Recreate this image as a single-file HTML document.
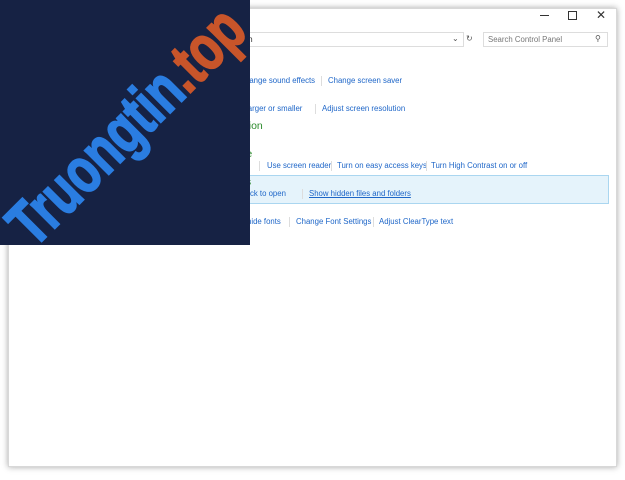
<!DOCTYPE html>
<html><head><style>
body{margin:0;width:625px;height:480px;background:#fff;position:relative;overflow:hidden;font-family:"Liberation Sans",sans-serif;}
.win{position:absolute;left:8px;top:8px;width:607px;height:457px;background:#fff;box-shadow:0 0 6px rgba(0,0,0,.35);border:1px solid #d8d8d8;}
.a{position:absolute;font-size:7.8px;color:#1e66c8;white-space:nowrap;}
.g{position:absolute;font-size:10.5px;color:#2b8a2b;white-space:nowrap;}
.sep{position:absolute;width:1px;height:10px;background:#ddd;}
.logo{position:absolute;left:0;top:0;width:250px;height:245px;background:#162244;overflow:hidden;}
.lt{position:absolute;left:126px;top:126px;transform:translate(-50%,-50%) rotate(-45deg) scaleX(0.74);font-family:"Liberation Sans",sans-serif;font-weight:bold;font-size:64px;line-height:1;color:#2a7de1;white-space:nowrap;-webkit-text-stroke:2px currentColor;}
</style></head><body>
<div class="win"></div>
<div style="position:absolute;left:540px;top:15px;width:9px;height:1px;background:#333"></div>
<div style="position:absolute;left:568px;top:11px;width:7px;height:7px;border:1px solid #333"></div>
<div style="position:absolute;left:596px;top:8px;font-size:12px;color:#333">✕</div>
<div style="position:absolute;left:230px;top:32px;width:232px;height:13px;border:1px solid #ddd"></div>
<div class="a" style="left:240px;top:35px;color:#222">tion</div>
<div class="a" style="left:452px;top:34px;color:#555">⌄</div>
<div class="a" style="left:466px;top:34px;color:#555">↻</div>
<div style="position:absolute;left:483px;top:32px;width:123px;height:13px;border:1px solid #ddd"></div>
<div class="a" style="left:488px;top:35px;color:#777">Search Control Panel</div>
<div class="a" style="left:595px;top:34px;color:#555">⚲</div>
<div class="a" style="left:245px;top:76px">hange sound effects</div><div class="sep" style="left:321px;top:76px"></div>
<div class="a" style="left:328px;top:76px">Change screen saver</div>
<div class="a" style="left:240px;top:104px">s larger or smaller</div><div class="sep" style="left:315px;top:104px"></div>
<div class="a" style="left:322px;top:104px">Adjust screen resolution</div>
<div class="g" style="left:240px;top:120px">ation</div>
<div class="g" style="left:240px;top:148px">tre</div>
<div class="a" style="left:240px;top:161px">n</div><div class="sep" style="left:259px;top:161px"></div>
<div class="a" style="left:267px;top:161px">Use screen reader</div><div class="sep" style="left:331px;top:161px"></div>
<div class="a" style="left:337px;top:161px">Turn on easy access keys</div><div class="sep" style="left:426px;top:161px"></div>
<div class="a" style="left:431px;top:161px">Turn High Contrast on or off</div>
<div style="position:absolute;left:230px;top:175px;width:377px;height:27px;background:#e5f3fb;border:1px solid #aad6f0"></div>
<div class="g" style="left:240px;top:176px">ns</div>
<div class="a" style="left:240px;top:189px">-click to open</div><div class="sep" style="left:302px;top:189px"></div>
<div class="a" style="left:309px;top:189px;text-decoration:underline">Show hidden files and folders</div>
<div class="a" style="left:247px;top:217px">hide fonts</div><div class="sep" style="left:289px;top:217px"></div>
<div class="a" style="left:296px;top:217px">Change Font Settings</div><div class="sep" style="left:373px;top:217px"></div>
<div class="a" style="left:379px;top:217px">Adjust ClearType text</div>
<div class="logo"><div class="lt">Truongtin<span style="color:#c8552a">.top</span></div></div>
</body></html>
